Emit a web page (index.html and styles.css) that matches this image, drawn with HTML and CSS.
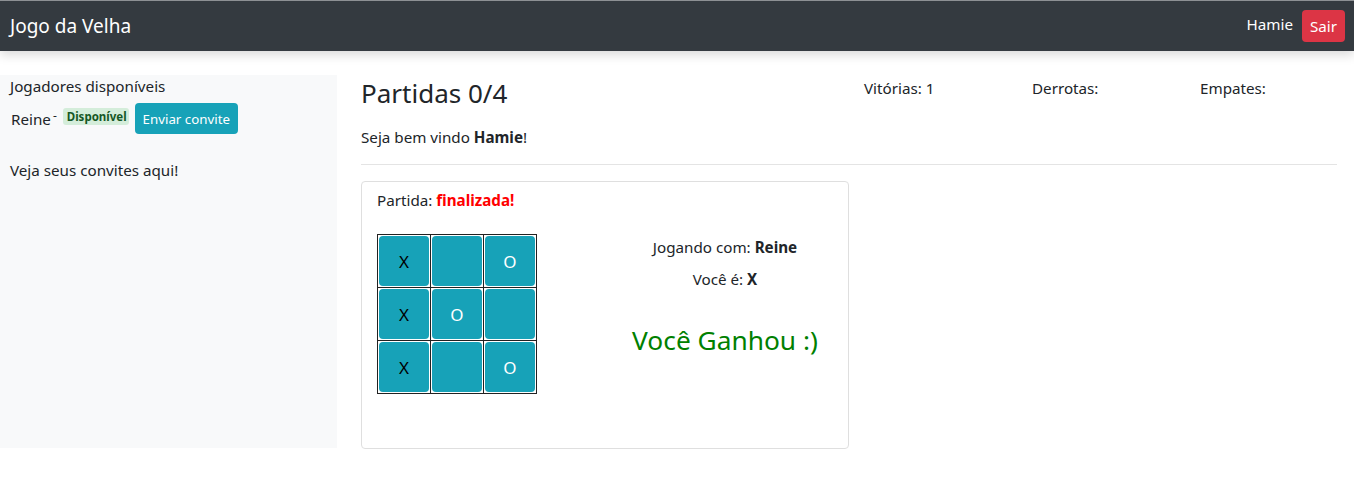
FILE: index.html
```html
<!DOCTYPE html>
<html lang="pt-BR">
<head>
<meta charset="utf-8">
<title>Jogo da Velha</title>
<link rel="stylesheet" href="styles.css">
</head>
<body>
<nav class="navbar">
  <span class="brand">Jogo da Velha</span>
  <div class="nav-right">
    <span class="user">Hamie</span>
    <button class="btn btn-danger">Sair</button>
  </div>
</nav>
<div class="layout">
  <aside class="sidebar">
    <div class="side-title">Jogadores disponíveis</div>
    <div class="player">
      <span class="pname">Reine</span><sup class="dash">-</sup>
      <span class="badge">Disponível</span>
      <button class="btn btn-info">Enviar convite</button>
    </div>
    <div class="invites">Veja seus convites aqui!</div>
  </aside>
  <main class="main">
    <div class="head-row">
      <h2 class="title">Partidas 0/4</h2>
      <div class="stat">Vitórias: 1</div>
      <div class="stat">Derrotas:</div>
      <div class="stat">Empates:</div>
    </div>
    <p class="welcome">Seja bem vindo <b>Hamie</b>!</p>
    <hr class="sep">
    <div class="card">
      <div class="status">Partida: <b class="red">finalizada!</b></div>
      <div class="card-row">
        <table class="board">
          <tr><td><button class="cell x">X</button></td><td><button class="cell"></button></td><td><button class="cell o">O</button></td></tr>
          <tr><td><button class="cell x">X</button></td><td><button class="cell o">O</button></td><td><button class="cell"></button></td></tr>
          <tr><td><button class="cell x">X</button></td><td><button class="cell"></button></td><td><button class="cell o">O</button></td></tr>
        </table>
        <div class="info">
          <p class="line">Jogando com: <b>Reine</b></p>
          <p class="line">Você é: <b>X</b></p>
          <p class="won">Você Ganhou :)</p>
        </div>
      </div>
    </div>
  </main>
</div>
</body>
</html>
```

FILE: styles.css
```css
* { box-sizing: border-box; }
body {
  margin: 0;
  font-family: "Noto Sans", "Open Sans", sans-serif;
  font-size: 15.2px;
  color: #212529;
  background: #fff;
}
.navbar {
  height: 51px;
  background: #343a40;
  border-top: 1px solid #8d9094;
  display: flex;
  align-items: center;
  justify-content: space-between;
  padding: 0 9px 0 10px;
  box-shadow: 0 4px 10px rgba(0,0,0,0.15);
}
.brand { color: #fff; font-size: 19px; }
.nav-right { display: flex; align-items: center; gap: 9px; }
.user { color: #fff; font-size: 15.2px; margin-top: -5px; }
.btn {
  border: none;
  border-radius: 4px;
  color: #fff;
  font-family: inherit;
  cursor: pointer;
}
.btn-danger {
  background: #dc3545;
  font-size: 15.2px;
  height: 32px;
  width: 43px;
  padding: 0;
}
.btn-info {
  background: #17a2b8;
  font-size: 13.3px;
  height: 31px;
  width: 103px;
  padding: 0;
}
.layout {
  display: flex;
  margin-top: 24px;
}
.sidebar {
  width: 337px;
  height: 373px;
  background: #f8f9fa;
  padding: 1px 10px;
}
.side-title { line-height: 20px; }
.player {
  display: flex;
  align-items: center;
  margin-top: 7px;
  height: 31px;
}
.pname { margin-left: 1px; }
.dash { font-size: 12px; margin: 0 6px 0 2px; position: relative; top: -3px; }
.badge {
  background: #d4edda;
  color: #155724;
  font-size: 11.5px;
  font-weight: 700;
  padding: 1px 4px;
  border-radius: 3px;
  margin-right: 6px;
  margin-top: -4px;
  width: 66px;
  text-align: center;
}
.invites { margin-top: 26px; }
.main {
  flex: 1;
  padding: 0 17px 0 24px;
}
.head-row {
  display: grid;
  grid-template-columns: 503px 168px 168px 1fr;
  align-items: start;
}
.title {
  margin: 1px 0 0;
  font-size: 26px;
  font-weight: 400;
  line-height: 34px;
}
.stat { margin-top: 2px; line-height: 22px; }
.welcome { margin: 16px 0 0; line-height: 22px; }
.sep { border: 0; border-top: 1px solid #e4e4e4; margin: 16px 0 16px; }
.card {
  width: 488px;
  height: 268px;
  border: 1px solid #dfdfdf;
  border-radius: 4px;
  padding: 8px 15px;
}
.status { line-height: 20px; }
.red { color: #ff0000; }
.card-row {
  display: flex;
  margin-top: 24px;
}
.board {
  border-collapse: collapse;
  border: 1px solid #222;
}
.board td {
  border: 1px solid #222;
  padding: 1px;
  width: 53px;
  height: 53px;
}
.cell {
  display: block;
  width: 50px;
  height: 50px;
  border: none;
  border-radius: 4px;
  background: #17a2b8;
  font-family: inherit;
  font-size: 17px;
  padding: 0;
}
.cell.x { color: #000; }
.cell.o { color: #fff; }
.info {
  flex: 1;
  text-align: center;
  padding-left: 80px;
}
.line { margin: 0 0 10px; line-height: 22px; }
.info .line:first-child { margin-top: 2px; }
.won {
  color: #008000;
  font-size: 26.3px;
  margin: 32px 0 0;
}
```
